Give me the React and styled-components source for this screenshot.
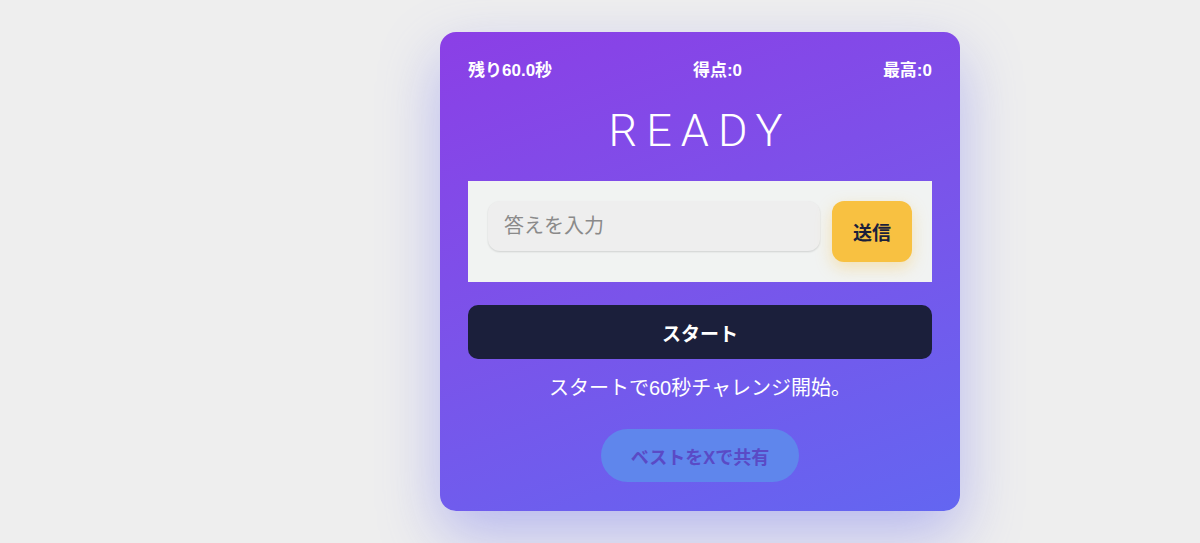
import React, { useState } from "react";
import styled, { createGlobalStyle } from "styled-components";

const Global = createGlobalStyle`
  html, body { margin: 0; padding: 0; }
  body {
    background: #eeeeee;
    font-family: "Liberation Sans", "Noto Sans CJK JP", sans-serif;
    -webkit-font-smoothing: antialiased;
  }
`;

const Page = styled.div`
  display: flex;
  justify-content: center;
  align-items: flex-start;
  padding: 32px 0 0 200px;
  min-height: 543px;
  box-sizing: border-box;
`;

const Card = styled.div`
  width: 520px;
  box-sizing: border-box;
  padding: 29px 28px;
  border-radius: 16px;
  background: linear-gradient(160deg, #8b3fe6 0%, #7a54ea 50%, #6366f1 100%);
  box-shadow: 0 24px 60px rgba(99, 102, 241, 0.4);
  color: #ffffff;
  display: flex;
  flex-direction: column;
  align-items: center;
`;

const Stats = styled.div`
  width: 100%;
  display: flex;
  justify-content: space-between;
  font-size: 17px;
  font-weight: 700;
  line-height: 20px;
`;

const Title = styled.h1`
  margin: 23px 0 0;
  font-size: 45px;
  font-weight: 300;
  letter-spacing: 9px;
  line-height: 53px;
  font-family: "Roboto", "Liberation Sans", sans-serif;
`;

const AnswerPanel = styled.form`
  margin-top: 24px;
  width: 100%;
  box-sizing: border-box;
  padding: 20px;
  background: #f1f3f2;
  display: flex;
  align-items: flex-start;
  gap: 12px;
`;

const AnswerInput = styled.input`
  flex: 1;
  min-width: 0;
  height: 50px;
  box-sizing: border-box;
  border: none;
  outline: none;
  border-radius: 12px;
  padding: 0 16px;
  background: #eeeeee;
  box-shadow: 0 1px 2px rgba(0, 0, 0, 0.14);
  font-family: inherit;
  font-size: 20px;
  color: #333;
  &::placeholder { color: #8a8a8a; }
`;

const SendButton = styled.button`
  width: 80px;
  height: 61px;
  border: none;
  border-radius: 12px;
  background: #f8c141;
  color: #1b1f3b;
  font-family: inherit;
  font-size: 19px;
  font-weight: 700;
  box-shadow: 0 6px 16px rgba(248, 193, 65, 0.35);
  cursor: pointer;
`;

const StartButton = styled.button`
  margin-top: 23px;
  width: 100%;
  height: 54px;
  border: none;
  border-radius: 10px;
  background: #1b1f3b;
  color: #ffffff;
  font-family: inherit;
  font-size: 19px;
  font-weight: 700;
  cursor: pointer;
`;

const Message = styled.p`
  margin: 14px 0 0;
  font-size: 20px;
  line-height: 30px;
  font-weight: 400;
`;

const ShareButton = styled.button`
  margin-top: 26px;
  width: 198px;
  height: 53px;
  border: none;
  border-radius: 999px;
  background: #5f86ec;
  color: #5a4ac6;
  font-family: inherit;
  font-size: 18px;
  font-weight: 700;
  cursor: default;
`;

export default function App() {
  const [answer, setAnswer] = useState("");
  return (
    <>
      <Global />
      <Page>
        <Card>
          <Stats>
            <span>残り60.0秒</span>
            <span>得点:0</span>
            <span>最高:0</span>
          </Stats>
          <Title>READY</Title>
          <AnswerPanel onSubmit={(e) => e.preventDefault()}>
            <AnswerInput
              placeholder="答えを入力"
              value={answer}
              onChange={(e) => setAnswer(e.target.value)}
            />
            <SendButton type="submit">送信</SendButton>
          </AnswerPanel>
          <StartButton type="button">スタート</StartButton>
          <Message>スタートで60秒チャレンジ開始。</Message>
          <ShareButton type="button" disabled>ベストをXで共有</ShareButton>
        </Card>
      </Page>
    </>
  );
}
